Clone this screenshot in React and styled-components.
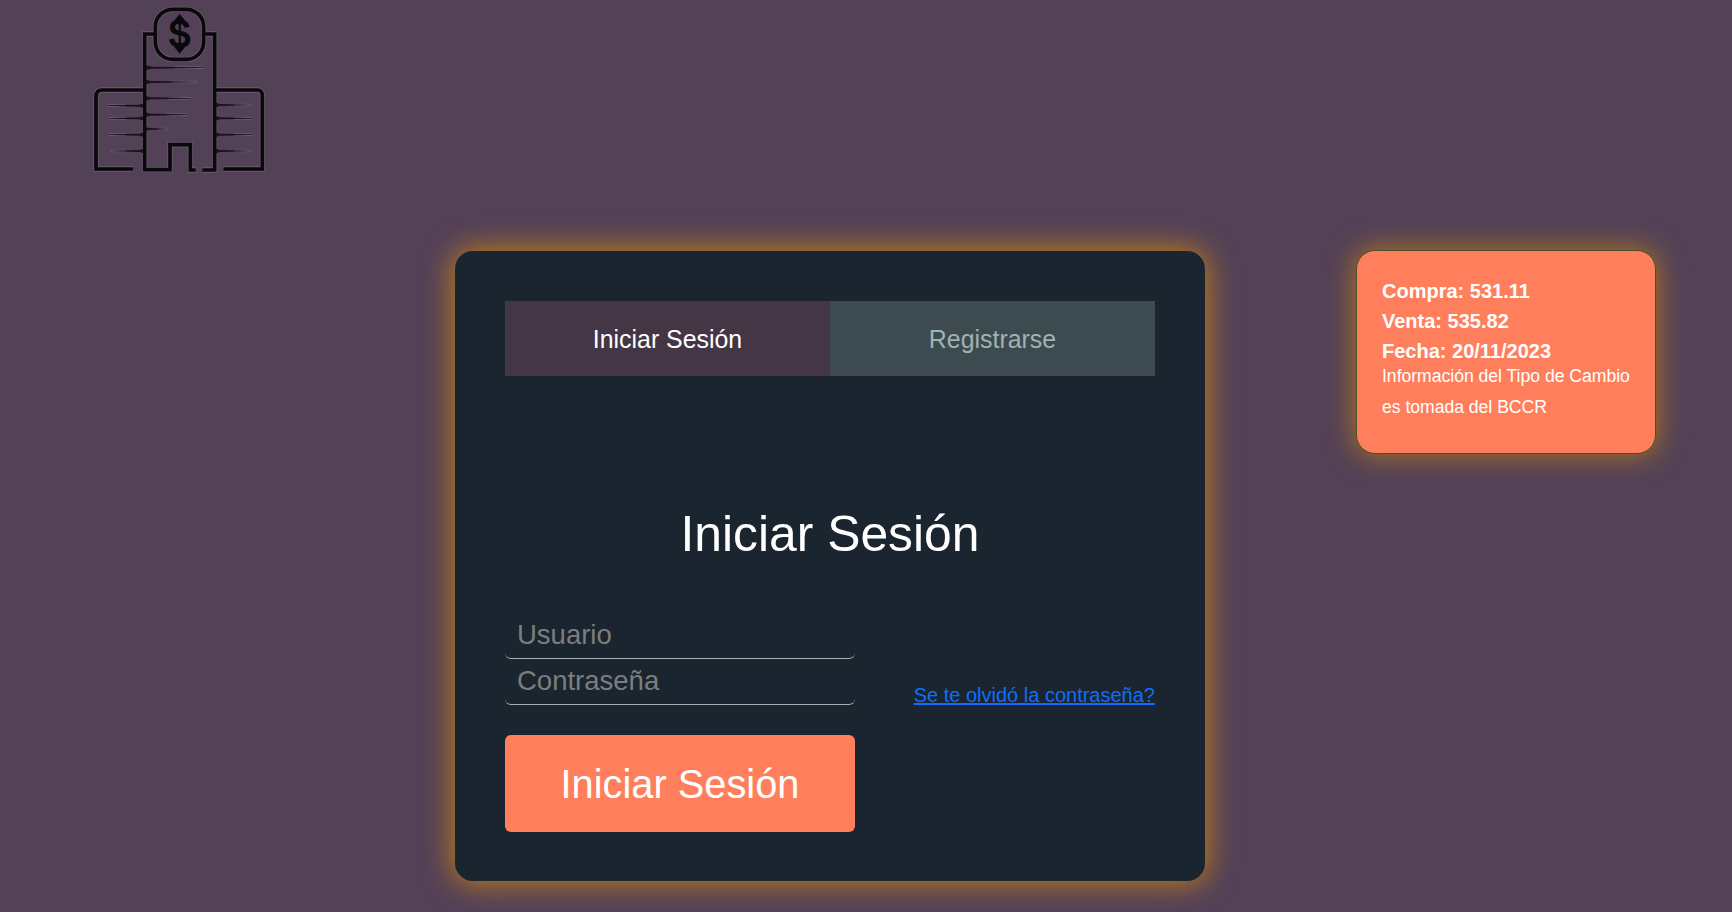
import React from 'react';
import styled, { createGlobalStyle } from 'styled-components';

const GlobalStyle = createGlobalStyle`
  * { box-sizing: border-box; }
  body {
    margin: 0;
    background: #534157;
    font-family: Arial, "Liberation Sans", sans-serif;
    color: #fff;
    overflow: hidden;
  }
`;

const Page = styled.div`
  display: flex;
  flex-direction: column;
  height: 912px;
`;

const Header = styled.header`
  flex: none;
  height: 251px;
  padding-left: 80px;
`;

const Main = styled.main`
  display: flex;
  align-items: flex-start;
  gap: 151px;
  padding-left: 455px;
`;

const LoginCard = styled.section`
  flex: none;
  display: flex;
  flex-direction: column;
  width: 750px;
  height: 630px;
  padding: 50px;
  border-radius: 18px;
  background: #1a2530;
  box-shadow: 0 0 30px 2px rgba(200, 130, 20, 0.95);
`;

const Tabs = styled.nav`
  display: flex;
  flex: none;
  height: 75px;
`;

const Tab = styled.a`
  flex: 1;
  text-align: center;
  font-size: 24.9px;
  line-height: 76px;
  height: 75px;
  color: ${(p) => (p.$active ? '#fff' : '#a0b3b0')};
  background: ${(p) => (p.$active ? '#443645' : '#3d4a50')};
`;

const Title = styled.h1`
  margin: 128px 0 0;
  font-size: 49.8px;
  font-weight: 400;
  line-height: 60px;
  text-align: center;
`;

const FormRow = styled.form`
  display: flex;
  justify-content: space-between;
  margin-top: 49px;
`;

const Fields = styled.div`
  display: flex;
  flex-direction: column;
  width: 350px;
`;

const Field = styled.input`
  display: block;
  width: 100%;
  height: 46px;
  padding: 0 12px 1px;
  border: 0 solid #a0b3b0;
  border-bottom-width: 1px;
  border-radius: 6px;
  outline: 0;
  background: transparent;
  color: #fff;
  font: 27.5px Arial, "Liberation Sans", sans-serif;

  &::placeholder { color: #7d7d7d; opacity: 1; }
`;

const Submit = styled.button`
  height: 97px;
  margin-top: 30px;
  padding: 2px 0 0;
  border: 0;
  border-radius: 6px;
  background: #ff7f5c;
  color: #fff;
  font: 39.8px Arial, "Liberation Sans", sans-serif;
`;

const Forgot = styled.a`
  margin-top: 70px;
  font-size: 20px;
  line-height: 24px;
  color: #0d6efd;
  text-decoration: underline;
  text-decoration-thickness: 2px;
  text-decoration-skip-ink: none;
`;

const RateCard = styled.aside`
  flex: none;
  width: 300px;
  height: 204px;
  margin-top: -1px;
  padding: 25px 25px 0;
  border: 1px solid #4f4c2b;
  border-radius: 19px;
  background: #ff7f5c;
  box-shadow: 0 0 29px 1px rgba(200, 130, 20, 0.8);
`;

const Rate = styled.div`
  font-size: 20px;
  font-weight: 700;
  line-height: 30px;
`;

const Note = styled.p`
  margin: -5px 0 0;
  font-size: 17.6px;
  letter-spacing: -0.02px;
  line-height: 31px;
  white-space: nowrap;
`;

const outlines = [
  'M190 270H66Q48 270 48 290V507H159',
  'M222 102H194V509H270V434H331V510H347',
  'M375 102H404V510H367',
  'M408 270H532Q547 270 547 288V507H430',
];

const taperedLines = [
  [198, 203, 368], [198, 246, 351], [198, 295, 332], [198, 344, 320], [198, 387, 266],
  [190, 317, 81], [190, 355, 88], [190, 404, 87], [190, 453, 90],
  [408, 315, 516], [408, 355, 516], [408, 404, 516], [408, 453, 516],
];

function BankLogo() {
  return (
    <svg width="200" height="185" viewBox="0 0 600 555" display="block">
      <g fill="none" stroke="#695b6d" strokeWidth="16">
        {outlines.map((d) => <path key={d} d={d} />)}
        <rect x="226" y="28" width="145" height="150" rx="52" />
      </g>
      <g fill="none" stroke="#09080a" strokeWidth="11">
        {outlines.map((d) => <path key={d} d={d} />)}
        <rect x="226" y="28" width="145" height="150" rx="52" />
      </g>
      {taperedLines.map(([x, y, end]) => (
        <g key={`${x}-${y}`}>
          <path d={`M${(x + end) / 2} ${y}H${end}`} stroke="#75697a" strokeWidth="7" />
          <path d={`M${x} ${y - 7}L${x + (end - x) * 0.1} ${y - 3}L${end} ${y - 1}V${y + 1}L${x + (end - x) * 0.1} ${y + 3}L${x} ${y + 7}Z`} fill="#171319" />
        </g>
      ))}
      <text x="299" y="144" textAnchor="middle" fontFamily="Liberation Sans, Arial, sans-serif" fontWeight="700" fontSize="120" fill="#09080a">$</text>
      <path d="M299 42L317 64H281ZM299 161L283 141H315Z" fill="#09080a" />
    </svg>
  );
}

export default function App() {
  return (
    <>
      <GlobalStyle />
      <Page>
        <Header><BankLogo /></Header>
        <Main>
          <LoginCard>
            <Tabs>
              <Tab $active>Iniciar Sesión</Tab>
              <Tab>Registrarse</Tab>
            </Tabs>
            <Title>Iniciar Sesión</Title>
            <FormRow>
              <Fields>
                <Field placeholder="Usuario" />
                <Field type="password" placeholder="Contraseña" />
                <Submit type="button">Iniciar Sesión</Submit>
              </Fields>
              <Forgot>Se te olvidó la contraseña?</Forgot>
            </FormRow>
          </LoginCard>
          <RateCard>
            <Rate>Compra: 531.11</Rate>
            <Rate>Venta: 535.82</Rate>
            <Rate>Fecha: 20/11/2023</Rate>
            <Note>Información del Tipo de Cambio<br />es tomada del BCCR</Note>
          </RateCard>
        </Main>
      </Page>
    </>
  );
}
